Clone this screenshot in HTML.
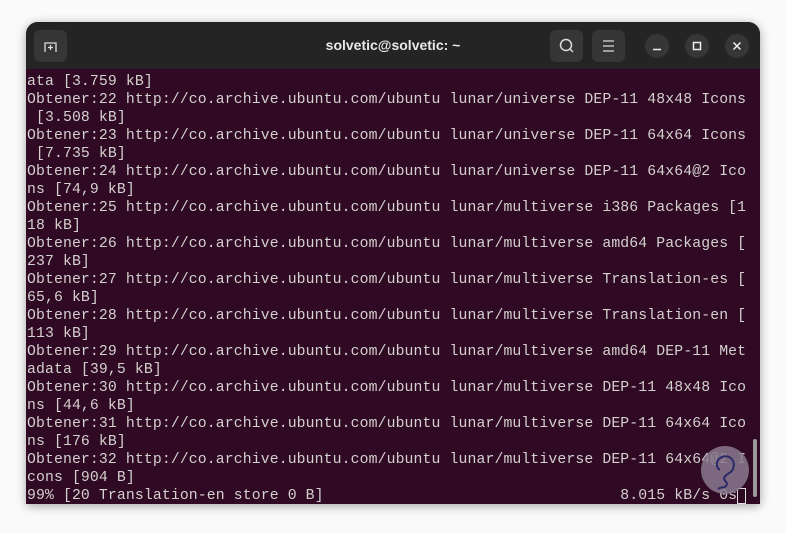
<!DOCTYPE html>
<html><head><style>
body{margin:0;width:786px;height:533px;background:#fafafa;position:relative;overflow:hidden;font-family:"Liberation Sans",sans-serif}
.win{position:absolute;left:26px;top:22px;width:734px;height:482px;background:#2c2c2c;border-radius:12px 12px 0 0;box-shadow:0 2px 10px rgba(0,0,0,.35);overflow:hidden}
.tb{position:absolute;left:0;top:0;width:734px;height:47px;background:#242424}
.btn{position:absolute;top:8px;width:33px;height:32px;background:#363636;border-radius:6px}
.cb{position:absolute;top:12px;width:24px;height:24px;background:#363636;border-radius:50%}
.title{position:absolute;top:15px;left:0;width:734px;text-align:center;color:#e8e8e8;font-weight:bold;font-size:14px}
.term{position:absolute;left:0;top:47px;width:734px;height:435px;background:#300a24}
pre{margin:0;position:absolute;left:1px;top:4px;font-family:"Liberation Mono",monospace;font-size:14.8px;letter-spacing:0.11px;line-height:18px;color:#d3d0cd}
.sb{position:absolute;left:727px;top:370px;width:4px;height:58px;background:#999;border-radius:2px}
</style></head><body>
<div class="win">
<div class="tb">
<div class="btn" style="left:8px"><svg width="33" height="32"><path d="M11 22V13h11v9M16.5 15v5M14 17.5h5" stroke="#ddd" stroke-width="1.3" fill="none"/></svg></div>
<div class="title">solvetic@solvetic: ~</div>
<div class="btn" style="left:524px"><svg width="33" height="32"><circle cx="16" cy="15" r="5.5" stroke="#ddd" stroke-width="1.5" fill="none"/><path d="M20 19l3 3" stroke="#ddd" stroke-width="1.5"/></svg></div>
<div class="btn" style="left:566px"><svg width="33" height="32"><path d="M11 11h11M11 16h11M11 21h11" stroke="#ddd" stroke-width="1.3"/></svg></div>
<div class="cb" style="left:619px"><svg width="24" height="24"><path d="M8 15.5h8" stroke="#eee" stroke-width="1.5"/></svg></div>
<div class="cb" style="left:659px"><svg width="24" height="24"><rect x="8.5" y="8.5" width="7" height="7" stroke="#eee" stroke-width="1.5" fill="none"/></svg></div>
<div class="cb" style="left:699px"><svg width="24" height="24"><path d="M8.5 8.5l7 7M15.5 8.5l-7 7" stroke="#eee" stroke-width="1.5"/></svg></div>
</div>
<div class="term">
<pre>ata [3.759 kB]
Obtener:22 http://co.archive.ubuntu.com/ubuntu lunar/universe DEP-11 48x48 Icons
 [3.508 kB]
Obtener:23 http://co.archive.ubuntu.com/ubuntu lunar/universe DEP-11 64x64 Icons
 [7.735 kB]
Obtener:24 http://co.archive.ubuntu.com/ubuntu lunar/universe DEP-11 64x64@2 Ico
ns [74,9 kB]
Obtener:25 http://co.archive.ubuntu.com/ubuntu lunar/multiverse i386 Packages [1
18 kB]
Obtener:26 http://co.archive.ubuntu.com/ubuntu lunar/multiverse amd64 Packages [
237 kB]
Obtener:27 http://co.archive.ubuntu.com/ubuntu lunar/multiverse Translation-es [
65,6 kB]
Obtener:28 http://co.archive.ubuntu.com/ubuntu lunar/multiverse Translation-en [
113 kB]
Obtener:29 http://co.archive.ubuntu.com/ubuntu lunar/multiverse amd64 DEP-11 Met
adata [39,5 kB]
Obtener:30 http://co.archive.ubuntu.com/ubuntu lunar/multiverse DEP-11 48x48 Ico
ns [44,6 kB]
Obtener:31 http://co.archive.ubuntu.com/ubuntu lunar/multiverse DEP-11 64x64 Ico
ns [176 kB]
Obtener:32 http://co.archive.ubuntu.com/ubuntu lunar/multiverse DEP-11 64x64@2 I
cons [904 B]
99% [20 Translation-en store 0 B]                                 8.015 kB/s 0s<span style="outline:1px solid #ddd;outline-offset:-1px">&nbsp;</span></pre>
<svg style="position:absolute;left:674px;top:376px" width="52" height="52"><circle cx="25" cy="25" r="24" fill="#8a7a8f" opacity=".85"/><path d="M22 12c8-3 14 4 11 12-2 5-7 4-9 9 0 4 5 4 2 8-2 2-6 1-8 3M22 12c-6 2-7 10-2 13" stroke="#2a2a6a" stroke-width="2" fill="none"/></svg>
<div class="sb"></div>
</div>
</div>
</body></html>
